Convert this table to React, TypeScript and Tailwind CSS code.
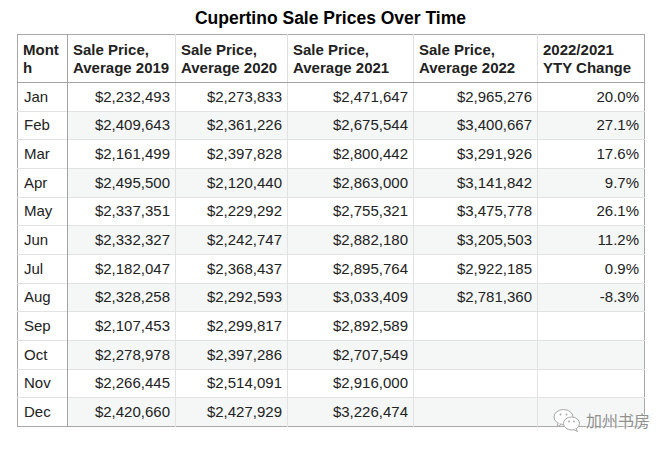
const rows: [string, string, string, string, string, string][] = [
  ['Jan', '$2,232,493', '$2,273,833', '$2,471,647', '$2,965,276', '20.0%'],
  ['Feb', '$2,409,643', '$2,361,226', '$2,675,544', '$3,400,667', '27.1%'],
  ['Mar', '$2,161,499', '$2,397,828', '$2,800,442', '$3,291,926', '17.6%'],
  ['Apr', '$2,495,500', '$2,120,440', '$2,863,000', '$3,141,842', '9.7%'],
  ['May', '$2,337,351', '$2,229,292', '$2,755,321', '$3,475,778', '26.1%'],
  ['Jun', '$2,332,327', '$2,242,747', '$2,882,180', '$3,205,503', '11.2%'],
  ['Jul', '$2,182,047', '$2,368,437', '$2,895,764', '$2,922,185', '0.9%'],
  ['Aug', '$2,328,258', '$2,292,593', '$3,033,409', '$2,781,360', '-8.3%'],
  ['Sep', '$2,107,453', '$2,299,817', '$2,892,589', '', ''],
  ['Oct', '$2,278,978', '$2,397,286', '$2,707,549', '', ''],
  ['Nov', '$2,266,445', '$2,514,091', '$2,916,000', '', ''],
  ['Dec', '$2,420,660', '$2,427,929', '$3,226,474', '', ''],
];

const headers = [
  ['Mont', 'h'],
  ['Sale Price,', 'Average 2019'],
  ['Sale Price,', 'Average 2020'],
  ['Sale Price,', 'Average 2021'],
  ['Sale Price,', 'Average 2022'],
  ['2022/2021', 'YTY Change'],
];

const widths = ['w-[50px]', 'w-[108px]', 'w-[112px]', 'w-[126px]', 'w-[124px]', 'w-[107px]'];

function WeChatIcon() {
  return (
    <svg width="28" height="24" viewBox="0 0 28 24" fill="none">
      <ellipse cx="10.5" cy="9" rx="9.5" ry="7.5" fill="#fff" stroke="#a8a8a8" strokeWidth="1" />
      <path d="M5 15 L4 19 L8.5 16" fill="#fff" stroke="#a8a8a8" strokeWidth="1" />
      <circle cx="7.5" cy="6.5" r="1" fill="#a8a8a8" />
      <circle cx="13.5" cy="6.5" r="1" fill="#a8a8a8" />
      <ellipse cx="18.5" cy="15.5" rx="8" ry="6.5" fill="#fff" stroke="#a8a8a8" strokeWidth="1" />
      <path d="M23 20.5 L24.5 23.5 L20.5 21.6" fill="#fff" stroke="#a8a8a8" strokeWidth="1" />
      <circle cx="16" cy="13.5" r="0.9" fill="#a8a8a8" />
      <circle cx="21" cy="13.5" r="0.9" fill="#a8a8a8" />
    </svg>
  );
}

export default function App() {
  return (
    <div className="relative w-[671px] h-[450px] bg-white font-['Liberation_Sans',Arial,sans-serif] text-[#222]">
      <div className="pl-[17px] pt-[8px]">
        <h1 className="w-[627px] text-center text-[17.5px] leading-[20px] font-bold text-black h-[26px]">
          Cupertino Sale Prices Over Time
        </h1>
        <table className="border-collapse border border-[#a8a8a8] table-fixed w-[627px] text-[15px] leading-[18px]">
          <thead>
            <tr className="h-[48px]">
              {headers.map((h, i) => (
                <th
                  key={i}
                  className={`${widths[i]} text-left align-middle font-bold px-[5px] border-b border-b-[#a3a3a3] ${
                    i === 0 ? 'border-r border-r-[#a3a3a3]' : 'border-l border-l-[#dedede]'
                  }`}
                >
                  <div>{h[0]}</div>
                  <div>{h[1]}</div>
                </th>
              ))}
            </tr>
          </thead>
          <tbody>
            {rows.map((r, ri) => (
              <tr key={r[0]} className={`h-[28.67px] ${ri % 2 === 1 ? 'bg-[#f4f7f6]' : 'bg-white'}`}>
                {r.map((c, ci) => (
                  <td
                    key={ci}
                    className={`px-[5px] align-middle border-t border-t-[#e2e2e2] ${
                      ci === 0
                        ? 'text-left pl-[6px] border-r border-r-[#a3a3a3] bg-white'
                        : 'text-right border-l border-l-[#e2e2e2]'
                    }`}
                  >
                    {c}
                  </td>
                ))}
              </tr>
            ))}
          </tbody>
        </table>
      </div>
      <div className="absolute left-[553px] top-[408px] flex items-center gap-[5px]">
        <WeChatIcon />
        <span className="text-[16px] leading-[18px] text-[#909090] font-['Noto_Sans_CJK_SC',sans-serif] [text-shadow:0_0_2px_#fff,0_0_2px_#fff]">
          加州书房
        </span>
      </div>
    </div>
  );
}
